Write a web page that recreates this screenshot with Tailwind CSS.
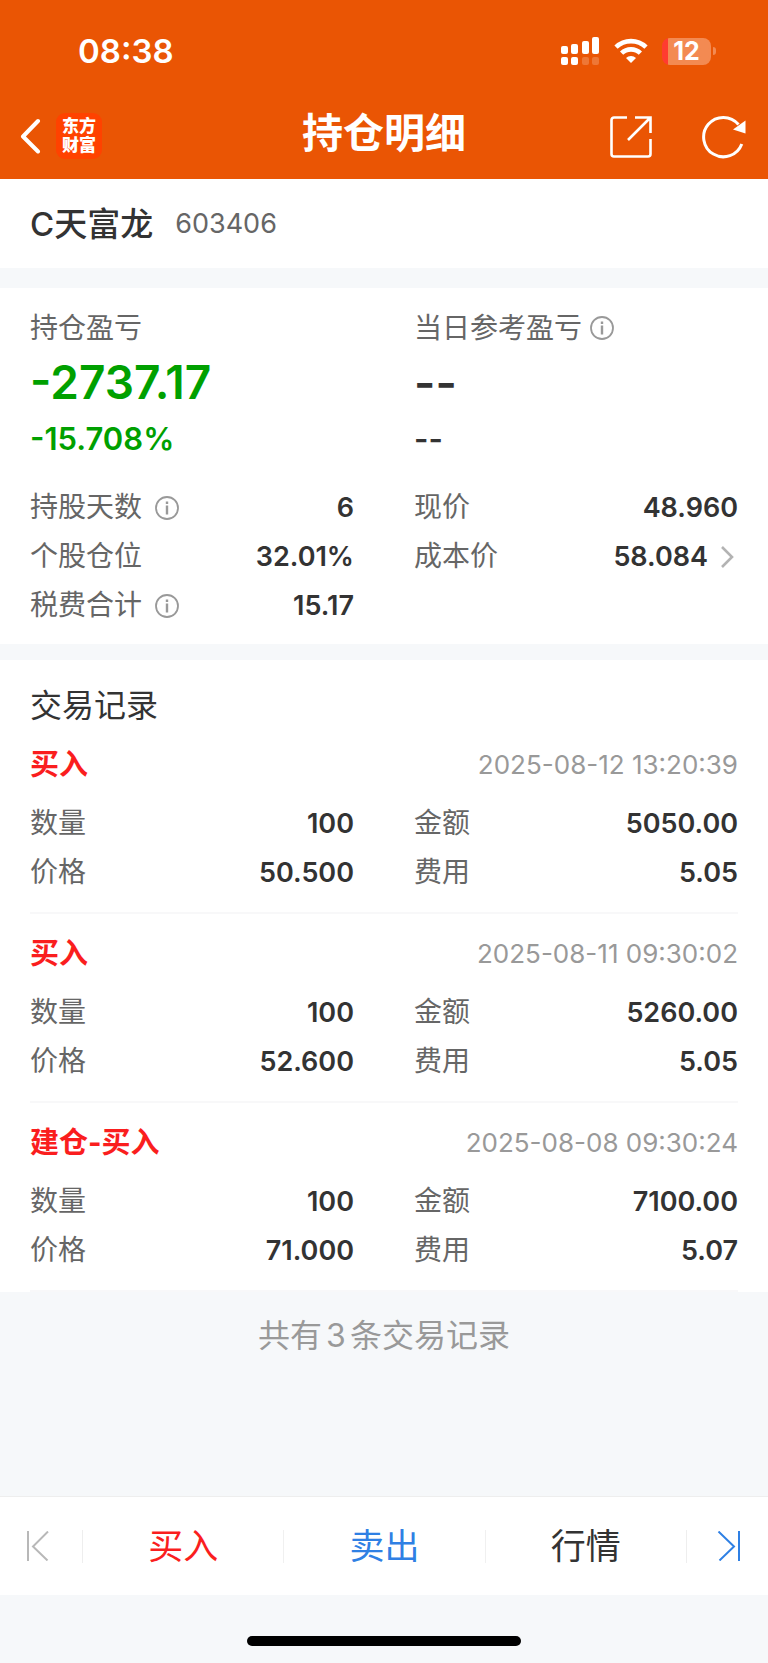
<!DOCTYPE html>
<html lang="zh-CN">
<head>
    <meta charset="UTF-8">
    <meta name="viewport" content="width=device-width, initial-scale=1.0">
    <script src="https://cdn.jsdelivr.net/npm/@tailwindcss/browser@4"></script>
    <title>持仓明细</title>
</head>
<body class="min-h-screen flex flex-col bg-[#f6f8fa] text-[#333333] font-['Inter','Noto_Sans_CJK_SC',sans-serif]">

    <header class="bg-[#ea5504] text-white">
        <!-- status bar -->
        <div class="h-[102px] flex items-center justify-between pl-[78px] pr-[52px]">
            <span class="text-[33px] leading-[40px] font-semibold">08:38</span>
            <div class="flex items-center gap-[14px]">
                <svg class="w-[40px] h-[28px]" viewBox="0 0 40 28" fill="#fff">
                    <rect x="1" y="9" width="7" height="8" rx="2"/>
                    <rect x="11" y="7" width="7" height="10" rx="2"/>
                    <rect x="22" y="4" width="7" height="13" rx="2"/>
                    <rect x="32" y="0" width="7" height="17" rx="2"/>
                    <rect x="1" y="20" width="7" height="8" rx="2"/>
                    <rect x="11" y="20" width="7" height="8" rx="2"/>
                    <rect x="22" y="20" width="7" height="8" rx="2" opacity=".2"/>
                    <rect x="32" y="20" width="7" height="8" rx="2" opacity=".2"/>
                </svg>
                <svg class="w-[34px] h-[26px]" viewBox="0 0 34 26" fill="none" stroke="#fff" stroke-width="4.6">
                    <path d="M2 9.2a21.5 21.5 0 0 1 30 0"/>
                    <path d="M7.6 15.2a13.4 13.4 0 0 1 18.8 0"/>
                    <path d="M17 25l-5-5a7.2 7.2 0 0 1 10 0z" fill="#fff" stroke="none"/>
                </svg>
                <div class="flex items-center gap-[2px]">
                    <div class="w-[49px] h-[27px] rounded-[8px] bg-gradient-to-r from-[#ff3b30] from-[6px] to-[#f38a52] to-[6px] text-center text-[25px] leading-[27px] font-bold">12</div>
                    <div class="w-[3px] h-[8px] rounded-r-full bg-[#f38a52]"></div>
                </div>
            </div>
        </div>
        <!-- title bar -->
        <div class="h-[77px] grid grid-cols-[1fr_auto_1fr] items-start px-[20px]">
            <div class="flex items-center gap-[14px] pt-[11px]">
                <button type="button" aria-label="返回">
                    <svg class="w-[22px] h-[36px]" viewBox="0 0 22 36" fill="none" stroke="#fff" stroke-width="4" stroke-linecap="round" stroke-linejoin="round"><path d="M18 3L3 18.500L18 33.500"/></svg>
                </button>
                <a href="#" class="w-[46px] h-[46px] rounded-[9px] bg-[#ff4200] flex flex-col items-center justify-center text-[17px] leading-[19px] font-black font-['Liberation_Sans','Noto_Sans_CJK_SC',sans-serif]"><span>东方</span><span>财富</span></a>
            </div>
            <h1 class="text-[41px] leading-[62px] font-bold">持仓明细</h1>
            <div class="flex items-center justify-end gap-[48px] pt-[13px]">
                <button type="button" aria-label="分享">
                    <svg class="w-[44px] h-[44px]" viewBox="0 0 44 44" fill="none" stroke="#fff" stroke-width="2.600"><path d="M17 2.500H4A2.500 2.500 0 0 0 1.500 5v34A2.500 2.500 0 0 0 4 41.500h34a2.500 2.500 0 0 0 2.500-2.500V24M25 2.500h15.500v15.500M40 3L18 25"/></svg>
                </button>
                <button type="button" aria-label="刷新">
                    <svg class="w-[46px] h-[44px]" viewBox="0 0 46 44" fill="none" stroke="#fff" stroke-width="3"><path d="M39.800 29A19.700 19.700 0 1 1 36.500 9.500"/><path d="M43.500 5.500v13L31 14.500z" fill="#fff" stroke="none"/></svg>
                </button>
            </div>
        </div>
    </header>

    <main class="flex-1">
        <section class="bg-white h-[89px] flex items-center gap-[22px] px-[30px]">
            <h2 class="text-[33px] leading-[40px] font-medium">C天富龙</h2>
            <span class="text-[27px] leading-[40px] text-[#666666]">603406</span>
        </section>

        <section class="bg-white mt-[20px] pt-[20px] pb-[14px] px-[30px]">
            <div class="grid grid-cols-2 gap-x-[60px]">
                <div>
                    <div class="text-[28px] leading-[40px] text-[#666666]">持仓盈亏</div>
                    <div class="text-[46px] leading-[68px] font-semibold text-[#00a000]">-2737.17</div>
                    <div class="text-[31px] leading-[46px] font-semibold text-[#00a000]">-15.708%</div>
                </div>
                <div>
                    <div class="flex items-center gap-[8px] text-[28px] leading-[40px] text-[#666666]">当日参考盈亏
                        <svg class="w-[24px] h-[24px]" viewBox="0 0 24 24" fill="none" stroke="#999" stroke-width="1.800"><circle cx="12" cy="12" r="11"/><path d="M12 9.500v9M12 5.500v2.500" stroke-width="2.400"/></svg>
                    </div>
                    <div class="text-[46px] leading-[68px] font-semibold">--</div>
                    <div class="text-[31px] leading-[46px] font-semibold">--</div>
                </div>
            </div>
            <dl class="grid grid-cols-2 gap-x-[60px] mt-[21px] text-[28px] leading-[49px]">
                <div class="flex justify-between">
                    <dt class="flex items-center gap-[13px] text-[#666666]">持股天数
                        <svg class="w-[24px] h-[24px]" viewBox="0 0 24 24" fill="none" stroke="#999" stroke-width="1.800"><circle cx="12" cy="12" r="11"/><path d="M12 9.500v9M12 5.500v2.500" stroke-width="2.400"/></svg>
                    </dt>
                    <dd class="text-[27px] font-semibold">6</dd>
                </div>
                <div class="flex justify-between">
                    <dt class="text-[#666666]">现价</dt>
                    <dd class="text-[27px] font-semibold">48.960</dd>
                </div>
                <div class="flex justify-between">
                    <dt class="text-[#666666]">个股仓位</dt>
                    <dd class="text-[27px] font-semibold">32.01%</dd>
                </div>
                <div class="flex justify-between">
                    <dt class="text-[#666666]">成本价</dt>
                    <dd class="flex items-center gap-[12px] text-[27px] font-semibold">58.084
                        <svg class="w-[18px] h-[24px]" viewBox="0 0 18 24" fill="none" stroke="#b3b3b3" stroke-width="2.600"><path d="M2 2l10 10L2 22"/></svg>
                    </dd>
                </div>
                <div class="flex justify-between">
                    <dt class="flex items-center gap-[13px] text-[#666666]">税费合计
                        <svg class="w-[24px] h-[24px]" viewBox="0 0 24 24" fill="none" stroke="#999" stroke-width="1.800"><circle cx="12" cy="12" r="11"/><path d="M12 9.500v9M12 5.500v2.500" stroke-width="2.400"/></svg>
                    </dt>
                    <dd class="text-[27px] font-semibold">15.17</dd>
                </div>
            </dl>
        </section>

        <section class="bg-white mt-[16px] pt-[23px] px-[30px]">
            <h2 class="text-[32px] leading-[46px]">交易记录</h2>

            <article class="h-[185px] pt-[16px] border-b-2 border-[#f8f8f9]">
                <div class="flex items-center justify-between leading-[40px]">
                    <h3 class="text-[29px] font-bold text-[#fa1e1e]">买入</h3>
                    <time class="text-[26px] text-[#999999]">2025-08-12 13:20:39</time>
                </div>
                <dl class="grid grid-cols-2 gap-x-[60px] mt-[14px] text-[28px] leading-[49px]">
                    <div class="flex justify-between"><dt class="text-[#666666]">数量</dt><dd class="text-[27px] font-semibold">100</dd></div>
                    <div class="flex justify-between"><dt class="text-[#666666]">金额</dt><dd class="text-[27px] font-semibold">5050.00</dd></div>
                    <div class="flex justify-between"><dt class="text-[#666666]">价格</dt><dd class="text-[27px] font-semibold">50.500</dd></div>
                    <div class="flex justify-between"><dt class="text-[#666666]">费用</dt><dd class="text-[27px] font-semibold">5.05</dd></div>
                </dl>
            </article>

            <article class="h-[189px] pt-[20px] border-b-2 border-[#f8f8f9]">
                <div class="flex items-center justify-between leading-[40px]">
                    <h3 class="text-[29px] font-bold text-[#fa1e1e]">买入</h3>
                    <time class="text-[26px] text-[#999999]">2025-08-11 09:30:02</time>
                </div>
                <dl class="grid grid-cols-2 gap-x-[60px] mt-[14px] text-[28px] leading-[49px]">
                    <div class="flex justify-between"><dt class="text-[#666666]">数量</dt><dd class="text-[27px] font-semibold">100</dd></div>
                    <div class="flex justify-between"><dt class="text-[#666666]">金额</dt><dd class="text-[27px] font-semibold">5260.00</dd></div>
                    <div class="flex justify-between"><dt class="text-[#666666]">价格</dt><dd class="text-[27px] font-semibold">52.600</dd></div>
                    <div class="flex justify-between"><dt class="text-[#666666]">费用</dt><dd class="text-[27px] font-semibold">5.05</dd></div>
                </dl>
            </article>

            <article class="h-[189px] pt-[20px] border-b-2 border-[#f8f8f9]">
                <div class="flex items-center justify-between leading-[40px]">
                    <h3 class="text-[29px] font-bold text-[#fa1e1e]">建仓-买入</h3>
                    <time class="text-[26px] text-[#999999]">2025-08-08 09:30:24</time>
                </div>
                <dl class="grid grid-cols-2 gap-x-[60px] mt-[14px] text-[28px] leading-[49px]">
                    <div class="flex justify-between"><dt class="text-[#666666]">数量</dt><dd class="text-[27px] font-semibold">100</dd></div>
                    <div class="flex justify-between"><dt class="text-[#666666]">金额</dt><dd class="text-[27px] font-semibold">7100.00</dd></div>
                    <div class="flex justify-between"><dt class="text-[#666666]">价格</dt><dd class="text-[27px] font-semibold">71.000</dd></div>
                    <div class="flex justify-between"><dt class="text-[#666666]">费用</dt><dd class="text-[27px] font-semibold">5.07</dd></div>
                </dl>
            </article>
        </section>

        <p class="pt-[21px] text-center text-[32px] leading-[46px] text-[#999999]">共有<span class="mx-[4px]">3</span>条交易记录</p>
    </main>

    <nav class="h-[99px] bg-white border-t border-[#eeeeee] flex items-center text-[35px] leading-[33px]">
        <button type="button" aria-label="上一只" class="w-[83px] h-[33px] pl-[26px] border-r border-[#eeeeee]">
            <svg class="w-[24px] h-[30px]" viewBox="0 0 24 30" fill="none" stroke="#b8b8b8" stroke-width="2"><path d="M2 0v30M22 0.500L7 15.500L21.500 29.500"/></svg>
        </button>
        <button type="button" class="flex-1 h-[33px] border-r border-[#f0f0f0] text-[#fa1e1e]">买入</button>
        <button type="button" class="flex-1 h-[33px] border-r border-[#f0f0f0] text-[#2f80e4]">卖出</button>
        <button type="button" class="flex-1 h-[33px] border-r border-[#eeeeee]">行情</button>
        <button type="button" aria-label="下一只" class="w-[81px] h-[33px] pl-[30px]">
            <svg class="w-[24px] h-[30px]" viewBox="0 0 24 30" fill="none" stroke="#2f80e4" stroke-width="2"><path d="M22 0v30M1.500 0.500L17 15.500L2.500 29.500"/></svg>
        </button>
    </nav>

    <!-- home indicator -->
    <footer class="h-[68px] pt-[41px]">
        <div class="w-[274px] h-[10px] mx-auto rounded-full bg-black"></div>
    </footer>

</body>
</html>
